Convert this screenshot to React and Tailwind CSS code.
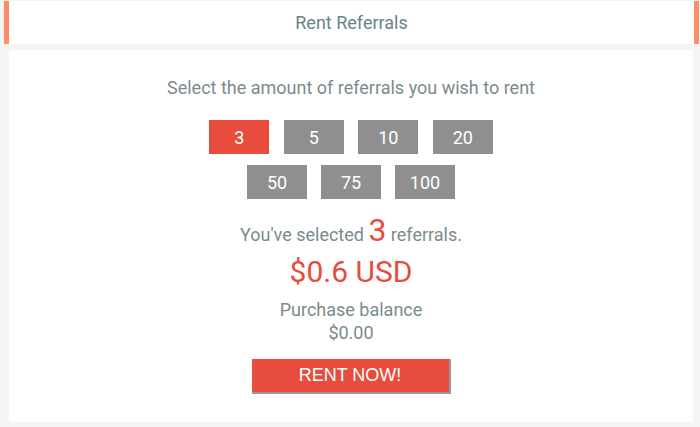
export default function App() {
  const opts = [3, 5, 10, 20, 50, 75, 100];
  const row1 = opts.slice(0, 4);
  const row2 = opts.slice(4);
  const Btn = ({ v }) => (
    <div
      className={`w-[60px] h-[34px] flex items-center justify-center text-[18px] text-white ${
        v === 3 ? "bg-[#e74c3c]" : "bg-[#8f8f8f]"
      }`}
    >
      {v}
    </div>
  );
  return (
    <div className="w-[700px] h-[427px] bg-[#f5f5f5] pt-[1px] pl-[4px] pr-[1px] overflow-hidden" style={{ fontFamily: "Roboto, 'Liberation Sans', sans-serif" }}>
      <div className="h-[43px] bg-white border-l-[5px] border-r-[5px] border-[#ff8c69] flex items-center justify-center text-[18px] text-[#6a8386]">
        Rent Referrals
      </div>
      <div className="mt-[6px] ml-[5px] mr-[6px] h-[372px] bg-white flex flex-col items-center">
        <div className="mt-[27px] text-[18px] text-[#7b8b8c] leading-[22px]">
          Select the amount of referrals you wish to rent
        </div>
        <div className="mt-[21px] flex gap-[14.5px]">
          {row1.map((v) => (
            <Btn key={v} v={v} />
          ))}
        </div>
        <div className="mt-[11px] flex gap-[14px]">
          {row2.map((v) => (
            <Btn key={v} v={v} />
          ))}
        </div>
        <div className="mt-[14px] text-[18px] text-[#7b8b8c] flex items-baseline h-[34px]">
          <span>You've selected&nbsp;</span>
          <span className="text-[32px] text-[#e74c3c] leading-[34px]">3</span>
          <span>&nbsp;referrals.</span>
        </div>
        <div className="mt-[6px] text-[30px] text-[#e74c3c] leading-[38px]">$0.6 USD</div>
        <div className="mt-[7px] text-[18px] text-[#7b8b8c] leading-[23px]">Purchase balance</div>
        <div className="text-[18px] text-[#7b8b8c] leading-[24px]">$0.00</div>
        <div
          className="mt-[14px] w-[199px] h-[35px] bg-[#e74c3c] border-b-[2px] border-r-[2px] border-[#999999] flex items-center justify-center text-white text-[18px]"
          style={{ fontFamily: "'Liberation Sans', Arial, sans-serif" }}
        >
          RENT NOW!
        </div>
      </div>
    </div>
  );
}
